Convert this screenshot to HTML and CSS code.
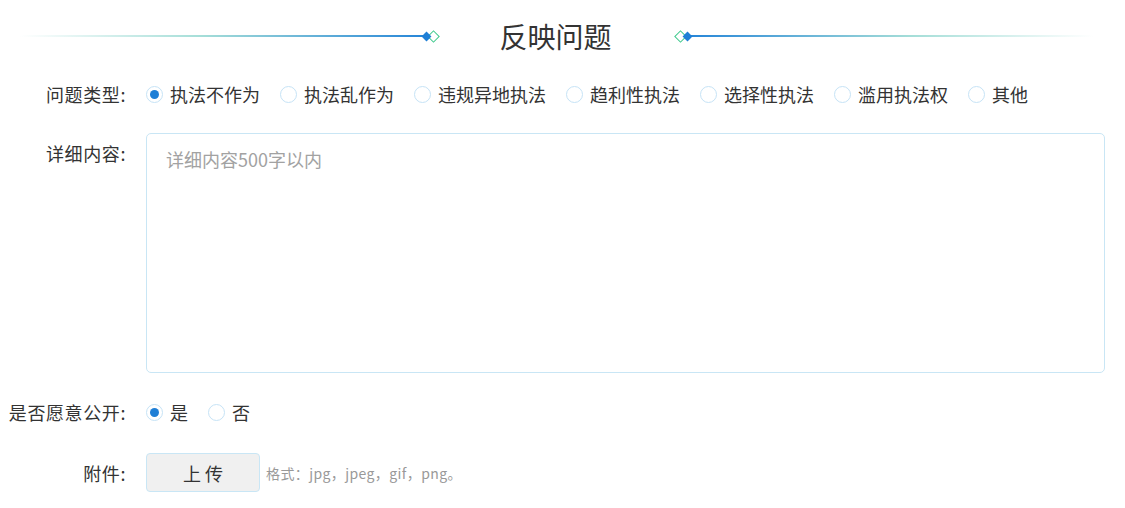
FILE: index.html
```html
<!DOCTYPE html>
<html lang="zh-CN">
<head>
    <meta charset="UTF-8">
    <title>反映问题</title>
    <link rel="stylesheet" href="styles.css">
</head>
<body>

<div class="page">
    <div class="title-bar">
        <div class="line line-left"></div>
        <span class="gem gem-solid"></span>
        <span class="gem gem-outline gem-left"></span>
        <h1>反映问题</h1>
        <span class="gem gem-outline gem-right"></span>
        <span class="gem gem-solid"></span>
        <div class="line line-right"></div>
    </div>

    <form id="report-form">
        <div class="form-row">
            <label class="row-label">问题类型:</label>
            <div class="radio-group">
                <label class="radio"><input type="radio" name="type" checked><span>执法不作为</span></label>
                <label class="radio"><input type="radio" name="type"><span>执法乱作为</span></label>
                <label class="radio"><input type="radio" name="type"><span>违规异地执法</span></label>
                <label class="radio"><input type="radio" name="type"><span>趋利性执法</span></label>
                <label class="radio"><input type="radio" name="type"><span>选择性执法</span></label>
                <label class="radio"><input type="radio" name="type"><span>滥用执法权</span></label>
                <label class="radio"><input type="radio" name="type"><span>其他</span></label>
            </div>
        </div>

        <div class="form-row row-top">
            <label class="row-label" for="detail">详细内容:</label>
            <textarea id="detail" name="detail" placeholder="详细内容500字以内"></textarea>
        </div>

        <div class="form-row">
            <label class="row-label">是否愿意公开:</label>
            <div class="radio-group">
                <label class="radio"><input type="radio" name="public" checked><span>是</span></label>
                <label class="radio"><input type="radio" name="public"><span>否</span></label>
            </div>
        </div>

        <div class="form-row row-upload">
            <label class="row-label">附件:</label>
            <button type="button" class="upload-btn">上 传</button>
            <span class="hint">格式：jpg，jpeg，gif，png。</span>
        </div>
    </form>
</div>

</body>
</html>
```

FILE: styles.css
```css
body {
    margin: 0;
    font-family: "Noto Sans CJK SC", "Noto Sans", sans-serif;
    color: #333;
    background: #fff;
}

.page {
    width: 1125px;
}

/* title with lines and diamonds */
.title-bar {
    display: flex;
    align-items: center;
    height: 40px;
    padding: 16px 32px 0 20px;
}

.title-bar h1 {
    margin: 0 64px 0 62px;
    font-size: 28px;
    font-weight: normal;
    line-height: 40px;
    color: #333;
}

.line {
    flex: 1;
    height: 2px;
}

.line-left {
    background: linear-gradient(to right, rgba(255, 255, 255, 0), #a5ded8 45%, #2786d8 100%);
}

.line-right {
    background: linear-gradient(to left, rgba(255, 255, 255, 0), #a5ded8 45%, #2786d8 100%);
}

.gem {
    display: block;
    width: 7px;
    height: 7px;
    transform: rotate(45deg);
    box-sizing: border-box;
}

.gem-solid {
    background: #1f7fd6;
    position: relative;
    z-index: 2;
}

.gem-outline {
    border: 1.5px solid #3ec98c;
    background: #fff;
    width: 9px;
    height: 9px;
}

.gem-left {
    margin-left: -1px;
}

.gem-right {
    margin-right: -1px;
}

/* form rows */
#report-form {
    padding: 19px 20px 0 0;
}

.form-row {
    display: flex;
    align-items: center;
    min-height: 38px;
    margin-bottom: 20px;
}

.row-top {
    align-items: flex-start;
}

.row-upload {
    margin-top: 22px;
}

.row-label {
    width: 126px;
    margin-right: 20px;
    text-align: right;
    font-size: 18px;
    letter-spacing: 0.6px;
    line-height: 38px;
    color: #333;
    white-space: nowrap;
}

.row-top .row-label {
    line-height: 40px;
}

.radio-group {
    display: flex;
    align-items: center;
}

.radio {
    display: flex;
    align-items: center;
    margin-right: 20px;
    font-size: 18px;
    cursor: pointer;
}

.radio input {
    appearance: none;
    -webkit-appearance: none;
    width: 17px;
    height: 17px;
    margin: 0 7px 0 0;
    border: 1px solid #c6e3f6;
    border-radius: 50%;
    background: #fff;
    display: grid;
    place-content: center;
}

.radio input:checked::before {
    content: "";
    width: 9px;
    height: 9px;
    border-radius: 50%;
    background: #1f7fd6;
}

textarea {
    flex: 1;
    height: 240px;
    box-sizing: border-box;
    padding: 12px 19px;
    border: 1px solid #c9e6f5;
    border-radius: 5px;
    font-family: inherit;
    font-size: 18px;
    color: #333;
    resize: none;
    outline: none;
}

textarea::placeholder {
    color: #a2a2a2;
}

.upload-btn {
    width: 114px;
    height: 39px;
    background: #f0f0f0;
    border: 1px solid #c9e6f5;
    border-radius: 4px;
    font-family: inherit;
    font-size: 18px;
    color: #333;
    cursor: pointer;
}

.hint {
    margin-left: 6px;
    font-size: 14px;
    letter-spacing: 0.4px;
    color: #999;
}
```
